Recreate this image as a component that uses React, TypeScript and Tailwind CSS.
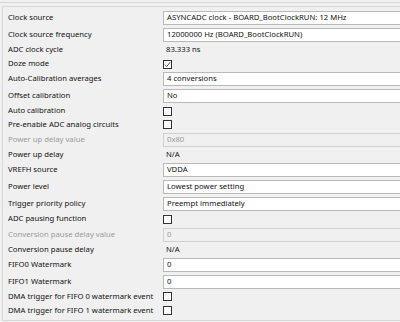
import { ReactNode } from 'react';

type Row =
    | { kind: 'input'; label: string; value: string; h: number; disabled?: boolean }
    | { kind: 'text'; label: string; value: string; h: number }
    | { kind: 'check'; label: string; checked?: boolean; h: number };

const rows: Row[] = [
    { kind: 'input', label: 'Clock source', value: 'ASYNCADC clock - BOARD_BootClockRUN: 12 MHz', h: 17 },
    { kind: 'input', label: 'Clock source frequency', value: '12000000 Hz (BOARD_BootClockRUN)', h: 17 },
    { kind: 'text', label: 'ADC clock cycle', value: '83.333 ns', h: 14 },
    { kind: 'check', label: 'Doze mode', checked: true, h: 14 },
    { kind: 'input', label: 'Auto-Calibration averages', value: '4 conversions', h: 16 },
    { kind: 'input', label: 'Offset calibration', value: 'No', h: 17 },
    { kind: 'check', label: 'Auto calibration', h: 14 },
    { kind: 'check', label: 'Pre-enable ADC analog circuits', h: 13 },
    { kind: 'input', label: 'Power up delay value', value: '0x80', h: 17, disabled: true },
    { kind: 'text', label: 'Power up delay', value: 'N/A', h: 14 },
    { kind: 'input', label: 'VREFH source', value: 'VDDA', h: 16 },
    { kind: 'input', label: 'Power level', value: 'Lowest power setting', h: 17 },
    { kind: 'input', label: 'Trigger priority policy', value: 'Preempt immediately', h: 17 },
    { kind: 'check', label: 'ADC pausing function', h: 14 },
    { kind: 'input', label: 'Conversion pause delay value', value: '0', h: 17, disabled: true },
    { kind: 'text', label: 'Conversion pause delay', value: 'N/A', h: 13 },
    { kind: 'input', label: 'FIFO0 Watermark', value: '0', h: 17 },
    { kind: 'input', label: 'FIFO1 Watermark', value: '0', h: 17 },
    { kind: 'check', label: 'DMA trigger for FIFO 0 watermark event', h: 13 },
    { kind: 'check', label: 'DMA trigger for FIFO 1 watermark event', h: 15 },
];

function Checkbox({ checked }: { checked?: boolean }) {
    return (
        <div className="w-[9px] h-[9px] border border-[#333333] bg-white flex items-center justify-center">
            {checked && (
                <svg width="7" height="7" viewBox="0 0 7 7">
                    <path d="M0.8 3.6 L2.7 5.5 L6.2 1.2" fill="none" stroke="#333333" strokeWidth="0.9" />
                </svg>
            )}
        </div>
    );
}

function Value({ row }: { row: Row }): ReactNode {
    if (row.kind === 'input') {
        return (
            <div
                className={`h-[14px] flex-1 flex items-center pl-[3px] border ${
                    row.disabled ? 'bg-[#f0f0f0] border-[#d0d0d0] text-[#9a9a9a]' : 'bg-white border-[#b9b9b9] text-[#111111]'
                }`}
            >
                {row.value}
            </div>
        );
    }
    if (row.kind === 'text') {
        return <div className="pl-[3px] text-[#111111]">{row.value}</div>;
    }
    return <Checkbox checked={row.checked} />;
}

export default function App() {
    return (
        <div
            className="w-[400px] h-[322px] overflow-hidden bg-[#f0f0f0] text-[7.7px] leading-none"
            style={{ fontFamily: '"Noto Sans", "Open Sans", sans-serif' }}
        >
            <div className="h-[2px]" />
            <div className="h-px bg-[#d6d6d6]" />
            <div className="h-[3px]" />
            <div className="ml-[2px] w-[430px] h-[315px] border border-[#d8d8d8] pt-[2px]">
                {rows.map((row) => (
                    <div key={row.label} className="flex items-center" style={{ height: row.h }}>
                        <div
                            className={`w-[160px] pl-[5px] shrink-0 whitespace-nowrap ${
                                row.kind === 'input' && row.disabled ? 'text-[#9a9a9a]' : 'text-[#111111]'
                            }`}
                        >
                            {row.label}
                        </div>
                        <div className="flex-1 flex items-center">
                            <Value row={row} />
                        </div>
                    </div>
                ))}
            </div>
        </div>
    );
}
